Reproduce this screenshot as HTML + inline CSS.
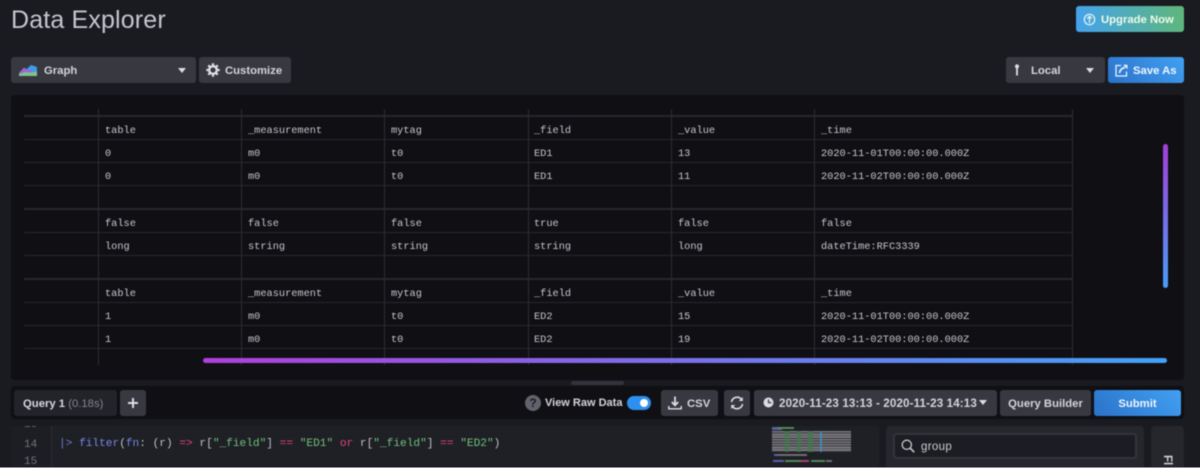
<!DOCTYPE html>
<html><head><meta charset="utf-8">
<style>
*{box-sizing:border-box}
html,body{margin:0;padding:0;width:1200px;height:468px;overflow:hidden;background:#1a1b20;font-family:"Liberation Sans",sans-serif}
#w{position:absolute;left:0;top:0;width:1200px;height:468px;overflow:hidden;filter:blur(.4px)}
.a{position:absolute}
.btn{position:absolute;height:26px;border-radius:3px;background:#383841;color:#d4d4da;font-size:11.3px;font-weight:bold;line-height:28px;white-space:nowrap}
.blue{background:linear-gradient(45deg,#2a72c8,#42a0f2);color:#f0f6ff}
.h{position:absolute;left:24px;width:1048px;height:1px;background:#27272d}
.v{position:absolute;top:109px;height:256px;width:1px;background:#2c2c32}
.t{position:absolute;font-family:"Liberation Mono",monospace;font-size:10.3px;line-height:12px;color:#c6c6cc;white-space:pre;margin-top:1px}
.caret{position:absolute;width:0;height:0;border-left:4.5px solid transparent;border-right:4.5px solid transparent;border-top:5px solid #dcdce2}
.code{position:absolute;font-family:"Liberation Mono",monospace;font-size:11.15px;line-height:14px;white-space:pre;color:#c0c0c8}
.m{position:absolute;height:1.4px}
</style></head><body>
<div id="w">
<div class="a" style="left:11px;top:3px;font-size:25px;line-height:34px;color:#c6c6ce;letter-spacing:.15px">Data Explorer</div>

<div class="btn" style="left:1076px;top:6px;width:108px;background:linear-gradient(80deg,#44a2ee,#5fb77a);color:#eefbe6;padding-left:25px">Upgrade Now</div>
<svg class="a" style="left:1083px;top:13px" width="13" height="13" viewBox="0 0 13 13" fill="none" stroke="#e8f6ee" stroke-width="1.2"><circle cx="6.5" cy="6.5" r="5.2"/><path d="M6.5 10V3.5M4.2 5.6L6.5 3.3l2.3 2.3"/></svg>

<div class="btn" style="left:11px;top:57px;width:185px;padding-left:33px">Graph</div>
<svg class="a" style="left:19px;top:64px" width="18" height="13" viewBox="0 0 18 13"><path d="M0 9L5 4l3 1 4-4 6 2v7H0z" fill="#3f9bea"/><path d="M0 9L5 3.5 9 7l3-1 6 3v1H0z" fill="#a85fd8"/><path d="M0 10l6-2 5 .5 7-1V12H0z" fill="#7cc48a"/></svg>
<div class="caret" style="left:178px;top:68px"></div>
<div class="btn" style="left:199px;top:57px;width:92px;padding-left:26px">Customize</div>
<svg class="a" style="left:206px;top:63px" width="14" height="14" viewBox="0 0 14 14"><circle cx="7" cy="7" r="3.8" fill="none" stroke="#dcdce2" stroke-width="2.4"/><path d="M7 .3V3M7 11v2.7M.3 7H3M11 7h2.7M2.3 2.3l1.9 1.9M9.8 9.8l1.9 1.9M2.3 11.7l1.9-1.9M9.8 4.2l1.9-1.9" stroke="#dcdce2" stroke-width="2.2"/></svg>

<div class="btn" style="left:1006px;top:57px;width:99px;padding-left:25px">Local</div>
<svg class="a" style="left:1013px;top:64px" width="8" height="12" viewBox="0 0 8 12"><circle cx="4" cy="2.4" r="2" fill="#dcdce2"/><rect x="3.1" y="3" width="1.8" height="8.5" fill="#dcdce2"/></svg>
<div class="caret" style="left:1086px;top:68px"></div>
<div class="btn blue" style="left:1108px;top:57px;width:76px;padding-left:25px">Save As</div>
<svg class="a" style="left:1115px;top:64px" width="13" height="13" viewBox="0 0 13 13" fill="none" stroke="#e6f2ff" stroke-width="1.3"><path d="M6 1.5H1v10.5h10.5V7.5"/><path d="M4.5 9C5 6 7 4 10 3.5" stroke-width="1.8"/><path d="M8 .8h4.5v4.5z" fill="#e6f2ff" stroke="none"/></svg>

<div class="a" style="left:11px;top:95px;width:1173px;height:285px;background:#0f0f14;border-radius:4px"></div>
<div class="h" style="top:115px;height:2px"></div><div class="h" style="top:139px"></div><div class="h" style="top:162px"></div><div class="h" style="top:185px"></div><div class="h" style="top:208px;height:2px"></div><div class="h" style="top:232px"></div><div class="h" style="top:255px"></div><div class="h" style="top:278px;height:2px"></div><div class="h" style="top:302px"></div><div class="h" style="top:325px"></div><div class="h" style="top:348px"></div>
<div class="v" style="left:98px"></div><div class="v" style="left:241px"></div><div class="v" style="left:384px"></div><div class="v" style="left:528px"></div><div class="v" style="left:671px"></div><div class="v" style="left:814px"></div><div class="v" style="left:1072px"></div>

<div class="t" style="left:105px;top:124px">table</div><div class="t" style="left:248px;top:124px">_measurement</div><div class="t" style="left:391px;top:124px">mytag</div><div class="t" style="left:534px;top:124px">_field</div><div class="t" style="left:678px;top:124px">_value</div><div class="t" style="left:821px;top:124px">_time</div>
<div class="t" style="left:105px;top:147px">0</div><div class="t" style="left:248px;top:147px">m0</div><div class="t" style="left:391px;top:147px">t0</div><div class="t" style="left:534px;top:147px">ED1</div><div class="t" style="left:678px;top:147px">13</div><div class="t" style="left:821px;top:147px">2020-11-01T00:00:00.000Z</div>
<div class="t" style="left:105px;top:170px">0</div><div class="t" style="left:248px;top:170px">m0</div><div class="t" style="left:391px;top:170px">t0</div><div class="t" style="left:534px;top:170px">ED1</div><div class="t" style="left:678px;top:170px">11</div><div class="t" style="left:821px;top:170px">2020-11-02T00:00:00.000Z</div>
<div class="t" style="left:105px;top:217px">false</div><div class="t" style="left:248px;top:217px">false</div><div class="t" style="left:391px;top:217px">false</div><div class="t" style="left:534px;top:217px">true</div><div class="t" style="left:678px;top:217px">false</div><div class="t" style="left:821px;top:217px">false</div>
<div class="t" style="left:105px;top:240px">long</div><div class="t" style="left:248px;top:240px">string</div><div class="t" style="left:391px;top:240px">string</div><div class="t" style="left:534px;top:240px">string</div><div class="t" style="left:678px;top:240px">long</div><div class="t" style="left:821px;top:240px">dateTime:RFC3339</div>
<div class="t" style="left:105px;top:287px">table</div><div class="t" style="left:248px;top:287px">_measurement</div><div class="t" style="left:391px;top:287px">mytag</div><div class="t" style="left:534px;top:287px">_field</div><div class="t" style="left:678px;top:287px">_value</div><div class="t" style="left:821px;top:287px">_time</div>
<div class="t" style="left:105px;top:310px">1</div><div class="t" style="left:248px;top:310px">m0</div><div class="t" style="left:391px;top:310px">t0</div><div class="t" style="left:534px;top:310px">ED2</div><div class="t" style="left:678px;top:310px">15</div><div class="t" style="left:821px;top:310px">2020-11-01T00:00:00.000Z</div>
<div class="t" style="left:105px;top:333px">1</div><div class="t" style="left:248px;top:333px">m0</div><div class="t" style="left:391px;top:333px">t0</div><div class="t" style="left:534px;top:333px">ED2</div><div class="t" style="left:678px;top:333px">19</div><div class="t" style="left:821px;top:333px">2020-11-02T00:00:00.000Z</div>

<div class="a" style="left:1163px;top:144px;width:5px;height:144px;border-radius:3px;background:linear-gradient(180deg,#a33fd6,#4a9cf5)"></div>
<div class="a" style="left:203px;top:358px;width:964px;height:5px;border-radius:3px;background:linear-gradient(90deg,#b03fdc,#43a2f7)"></div>

<div class="a" style="left:571px;top:381px;width:53px;height:4px;border-radius:2px;background:#33333b"></div>

<div class="a" style="left:11px;top:386px;width:1173px;height:33px;background:#0f0f14;border-radius:4px"></div>
<div class="btn" style="left:14px;top:390px;width:103px;background:#23232a;padding-left:9px;color:#d8d8de">Query 1 <span style="font-weight:normal;color:#85858e">(0.18s)</span></div>
<div class="btn" style="left:120px;top:390px;width:26px"></div>
<div class="a" style="left:128px;top:402px;width:10px;height:2px;background:#dcdce2"></div><div class="a" style="left:132px;top:398px;width:2px;height:10px;background:#dcdce2"></div>

<div class="a" style="left:525px;top:395px;width:16px;height:16px;border-radius:50%;background:#62626c;color:#1a1b20;font-size:12px;font-weight:bold;line-height:16px;text-align:center">?</div>
<div class="a" style="left:545px;top:395px;font-size:11px;font-weight:bold;line-height:16px;color:#d4d4da">View Raw Data</div>
<div class="a" style="left:627px;top:396px;width:24px;height:14px;border-radius:7px;background:#2f8fee"></div>
<div class="a" style="left:640px;top:399px;width:8px;height:8px;border-radius:50%;background:#fff"></div>

<div class="btn" style="left:661px;top:390px;width:57px;padding-left:26px">CSV</div>
<svg class="a" style="left:668px;top:396px" width="14" height="14" viewBox="0 0 14 14" fill="none" stroke="#dcdce2" stroke-width="1.4"><path d="M7 .5V9M3.8 6L7 9.3 10.2 6" stroke-width="1.8"/><path d="M.8 10v2.8h12.4V10"/></svg>
<div class="btn" style="left:724px;top:390px;width:26px"></div>
<svg class="a" style="left:730px;top:396px" width="14" height="14" viewBox="0 0 14 14" fill="none" stroke="#dcdce2" stroke-width="1.6"><path d="M1.5 6A5.6 5.6 0 0 1 11.5 3.5M12.5 8A5.6 5.6 0 0 1 2.5 10.5"/><path d="M12.8 1v4h-4z" fill="#dcdce2" stroke="none"/><path d="M1.2 13V9h4z" fill="#dcdce2" stroke="none"/></svg>
<div class="btn" style="left:754px;top:390px;width:243px;padding-left:25px;font-size:11.6px;letter-spacing:.13px">2020-11-23 13:13 - 2020-11-23 14:13</div>
<svg class="a" style="left:763px;top:397px" width="11" height="11" viewBox="0 0 11 11"><circle cx="5.5" cy="5.5" r="5" fill="#dcdce2"/><path d="M5.5 2.5v3.2h3" stroke="#383841" stroke-width="1.2" fill="none"/></svg>
<div class="caret" style="left:979px;top:400px"></div>
<div class="btn" style="left:1000px;top:390px;width:91px;text-align:center">Query Builder</div>
<div class="btn blue" style="left:1094px;top:390px;width:87px;text-align:center">Submit</div>

<div class="a" style="left:11px;top:426px;width:868px;height:42px;background:#1f2025;overflow:hidden">
<div class="a" style="left:0;top:0;width:41px;height:42px;background:#1d1e23"></div>
<div class="a" style="left:40px;top:0;width:1px;height:42px;background:#2b2c33"></div>
<div class="code" style="left:13px;top:-8px;color:#6c6d76;font-size:11px">13</div>
<div class="code" style="left:13px;top:12px;color:#72737c;font-size:11px">14</div>
<div class="code" style="left:13px;top:29px;color:#72737c;font-size:11px">15</div>
<div class="code" style="left:48px;top:11px"><span style="color:#6f7bd8">|&gt;</span> <span style="color:#7a86e6">filter</span>(<span style="color:#7a86e6">fn</span>: (r) <span style="color:#e0447c">=&gt;</span> r[<span style="color:#6fc07c">"_field"</span>] <span style="color:#e0447c">==</span> <span style="color:#6fc07c">"ED1"</span> <span style="color:#e0447c">or</span> r[<span style="color:#6fc07c">"_field"</span>] <span style="color:#e0447c">==</span> <span style="color:#6fc07c">"ED2"</span>)</div>
</div>

<div class="a" style="left:771px;top:427px;width:80px;height:37px">
<div class="m" style="left:1px;top:0;width:5px;height:2px;background:#5560a8"></div><div class="m" style="left:6px;top:0;width:17px;height:2px;background:#4e8a58"></div>
<div class="m" style="left:1px;top:2px;width:10px;height:1.2px;background:#5560a8"></div>
<div class="a" style="left:1px;top:4px;width:79px;height:21px;background:repeating-linear-gradient(180deg,#77777d 0 1.7px,#35353b 1.7px 2.6px)"></div>
<div class="a" style="left:14px;top:4px;width:4px;height:21px;background:#3f7a4a;opacity:.75"></div>
<div class="a" style="left:26px;top:4px;width:4px;height:21px;background:#3f7a4a;opacity:.75"></div>
<div class="a" style="left:37px;top:4px;width:5px;height:21px;background:#3f7a4a;opacity:.75"></div>
<div class="a" style="left:49px;top:4px;width:2px;height:21px;background:#3f8fb8;opacity:.85"></div>
<div class="m" style="left:3px;top:27px;width:3px;height:2px;background:#5560a8"></div><div class="m" style="left:6px;top:27px;width:30px;height:2px;background:#6c6c72"></div>
<div class="m" style="left:2px;top:33px;width:11px;height:2px;background:#5560a8"></div><div class="m" style="left:14px;top:33px;width:16px;height:2px;background:#4e8a58"></div><div class="m" style="left:30px;top:33px;width:8px;height:2px;background:#a8406c"></div><div class="m" style="left:40px;top:33px;width:14px;height:2px;background:#4e8a58"></div><div class="m" style="left:55px;top:33px;width:6px;height:2px;background:#6c6c72"></div>
</div>

<div class="a" style="left:886px;top:426px;width:258px;height:42px;background:#26272d;border-radius:4px 4px 0 0"></div>
<div class="a" style="left:893px;top:433px;width:244px;height:26px;background:#1c1d22;border:2px solid #33343b;border-radius:3px;color:#ccccd2;font-size:11.5px;line-height:24px;padding-left:26px;letter-spacing:.35px">group</div>
<svg class="a" style="left:901px;top:439px" width="14" height="14" viewBox="0 0 14 14" fill="none" stroke="#c8c8ce" stroke-width="1.3"><circle cx="5.8" cy="5.8" r="4.6"/><path d="M9.2 9.2l4 4" stroke-width="1.6"/></svg>

<div class="a" style="left:1151px;top:426px;width:33px;height:42px;background:#26272d;border-radius:4px 4px 0 0;overflow:hidden"><div class="a" style="left:8px;top:32px;font-size:11.5px;font-weight:bold;color:#d0d0d6;transform:rotate(90deg);transform-origin:8px 5px;line-height:11px">Fl</div></div>
</div>
<div class="a" style="left:0;top:467px;width:1200px;height:1px;background:#8d8d92"></div>
</body></html>
